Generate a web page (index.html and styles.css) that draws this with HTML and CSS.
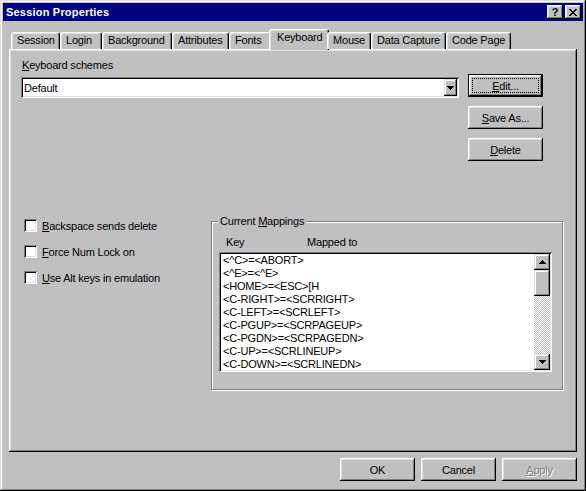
FILE: index.html
```html
<!DOCTYPE html>
<html>
<head>
<meta charset="utf-8">
<title>Session Properties</title>
<link rel="stylesheet" href="styles.css">
</head>
<body>
<div class="window">
  <div class="titlebar">
    <span class="title">Session Properties</span>
    <div class="title-buttons">
      <span class="tbtn tbtn-help">?</span>
      <span class="tbtn"><svg width="8" height="7" viewBox="0 0 8 7"><path d="M0 0h2v1H0zM6 0h2v1H6zM1 1h2v1H1zM5 1h2v1H5zM2 2h4v1H2zM3 3h2v1H3zM2 4h4v1H2zM1 5h2v1H1zM5 5h2v1H5zM0 6h2v1H0zM6 6h2v1H6z" fill="#000"/></svg></span>
    </div>
  </div>
  <div class="body">
    <div class="tabs">
      <div class="tab">Session</div>
      <div class="tab">Login</div>
      <div class="tab">Background</div>
      <div class="tab">Attributes</div>
      <div class="tab">Fonts</div>
      <div class="tab tab-active">Keyboard</div>
      <div class="tab">Mouse</div>
      <div class="tab">Data Capture</div>
      <div class="tab">Code Page</div>
    </div>
    <div class="panel">
      <div class="top">
        <div class="scheme">
          <div class="label"><u>K</u>eyboard schemes</div>
          <div class="combo">
            <span class="combo-text">Default</span>
            <span class="combo-btn"><svg width="7" height="4" viewBox="0 0 7 4"><path d="M0 0h7v1H0zM1 1h5v1H1zM2 2h3v1H2zM3 3h1v1H3z" fill="#000"/></svg></span>
          </div>
        </div>
        <div class="btn-col">
          <div class="btn btn-default"><span class="focus"><u>E</u>dit...</span></div>
          <div class="btn"><u>S</u>ave As...</div>
          <div class="btn"><u>D</u>elete</div>
        </div>
      </div>
      <div class="bottom">
        <div class="checks">
          <div class="check"><span class="box"></span><span><u>B</u>ackspace sends delete</span></div>
          <div class="check"><span class="box"></span><span><u>F</u>orce Num Lock on</span></div>
          <div class="check"><span class="box"></span><span><u>U</u>se Alt keys in emulation</span></div>
        </div>
        <div class="group">
          <div class="group-title">Current <u>M</u>appings</div>
          <div class="cols"><span class="col-key">Key</span><span>Mapped to</span></div>
          <div class="list">
            <div class="list-items">
              <div class="item">&lt;^C&gt;=&lt;ABORT&gt;</div>
              <div class="item">&lt;^E&gt;=&lt;^E&gt;</div>
              <div class="item">&lt;HOME&gt;=&lt;ESC&gt;[H</div>
              <div class="item">&lt;C-RIGHT&gt;=&lt;SCRRIGHT&gt;</div>
              <div class="item">&lt;C-LEFT&gt;=&lt;SCRLEFT&gt;</div>
              <div class="item">&lt;C-PGUP&gt;=&lt;SCRPAGEUP&gt;</div>
              <div class="item">&lt;C-PGDN&gt;=&lt;SCRPAGEDN&gt;</div>
              <div class="item">&lt;C-UP&gt;=&lt;SCRLINEUP&gt;</div>
              <div class="item">&lt;C-DOWN&gt;=&lt;SCRLINEDN&gt;</div>
            </div>
            <div class="scrollbar">
              <div class="sb-btn"><svg width="7" height="4" viewBox="0 0 7 4"><path d="M3 0h1v1H3zM2 1h3v1H2zM1 2h5v1H1zM0 3h7v1H0z" fill="#000"/></svg></div>
              <div class="sb-thumb"></div>
              <div class="sb-track"></div>
              <div class="sb-btn"><svg width="7" height="4" viewBox="0 0 7 4"><path d="M0 0h7v1H0zM1 1h5v1H1zM2 2h3v1H2zM3 3h1v1H3z" fill="#000"/></svg></div>
            </div>
          </div>
        </div>
      </div>
    </div>
    <div class="actions">
      <div class="btn">OK</div>
      <div class="btn">Cancel</div>
      <div class="btn btn-disabled"><u>A</u>pply</div>
    </div>
  </div>
</div>
</body>
</html>
```
FILE: styles.css
```css
* { box-sizing: border-box; }

body {
  margin: 0;
  font-family: "Liberation Sans", Arial, sans-serif;
  font-size: 11px;
  letter-spacing: -0.2px;
  color: #000;
  background: #c0c0c0;
}

u { text-underline-offset: 1px; }

.window {
  width: 586px;
  height: 491px;
  padding: 3px;
  background: #c0c0c0;
  display: flex;
  flex-direction: column;
  box-shadow: inset -1px -1px #000, inset 1px 1px #dfdfdf, inset -2px -2px #808080, inset 2px 2px #fff;
}

.titlebar {
  height: 18px;
  flex: none;
  background: #000080;
  display: flex;
  align-items: center;
  justify-content: space-between;
  padding: 0 2px 0 3px;
}

.title {
  color: #fff;
  font-weight: bold;
  font-size: 11px;
  letter-spacing: 0.2px;
}

.title-buttons { display: flex; gap: 2px; }

.tbtn {
  width: 16px;
  height: 14px;
  background: #c0c0c0;
  display: flex;
  align-items: center;
  justify-content: center;
  box-shadow: inset -1px -1px #000, inset 1px 1px #fff, inset -2px -2px #808080, inset 2px 2px #dfdfdf;
}

.tbtn-help {
  font-weight: bold;
  font-size: 11px;
  line-height: 12px;
  padding-bottom: 1px;
  letter-spacing: 0;
}

.body {
  flex: 1;
  display: flex;
  flex-direction: column;
  padding: 8px 6px 0 6px;
}

.tabs {
  display: grid;
  grid-template-columns: 49px 42px 70px 57px 42px 56px 44px 75px 65px;
  height: 20px;
  padding-left: 2px;
  align-items: end;
  position: relative;
  z-index: 1;
}

.tab {
  height: 17px;
  border: 1px solid;
  border-color: #fff #000 transparent #fff;
  border-bottom: none;
  border-radius: 3px 3px 0 0;
  box-shadow: inset -1px 0 #808080, inset 1px 1px #dfdfdf;
  background: #c0c0c0;
  padding: 1px 0 0 5px;
  line-height: 13px;
  white-space: nowrap;
}

.tab-active {
  height: 21px;
  margin: 0 -2px -1px -2px;
  padding-left: 7px;
}

.panel {
  height: 403px;
  flex: none;
  background: #c0c0c0;
  padding: 10px 12px 0 12px;
  box-shadow: inset -1px -1px #000, inset 1px 1px #fff, inset -2px -2px #808080, inset 2px 2px #dfdfdf;
}

.top { display: flex; align-items: flex-start; }

.scheme { width: 438px; }

.label { line-height: 13px; padding-left: 1px; }

.combo {
  margin-top: 5px;
  height: 21px;
  background: #fff;
  display: flex;
  align-items: center;
  padding: 2px;
  box-shadow: inset 1px 1px #808080, inset -1px -1px #fff, inset 2px 2px #000, inset -2px -2px #dfdfdf;
}

.combo-text { flex: 1; padding-left: 1px; }

.combo-btn {
  width: 13px;
  height: 17px;
  background: #c0c0c0;
  display: flex;
  align-items: center;
  justify-content: center;
  box-shadow: inset -1px -1px #000, inset 1px 1px #dfdfdf, inset -2px -2px #808080, inset 2px 2px #fff;
}

.btn-col {
  margin-left: 9px;
  margin-top: 15px;
  display: flex;
  flex-direction: column;
  gap: 9px;
}

.btn {
  width: 75px;
  height: 23px;
  background: #c0c0c0;
  display: flex;
  align-items: center;
  justify-content: center;
  box-shadow: inset -1px -1px #000, inset 1px 1px #fff, inset -2px -2px #808080, inset 2px 2px #dfdfdf;
}

.btn-default {
  border: 1px solid #000;
  align-items: stretch;
}

.focus {
  flex: 1;
  margin: 3px;
  border: 1px dotted #000;
  display: flex;
  align-items: center;
  justify-content: center;
}

.btn-disabled {
  color: #808080;
  text-shadow: 1px 1px #fff;
}

.bottom {
  display: flex;
  align-items: flex-start;
  margin-top: 54px;
}

.checks {
  width: 190px;
  padding: 4px 0 0 3px;
  display: flex;
  flex-direction: column;
  gap: 13px;
}

.check {
  display: flex;
  align-items: center;
  height: 13px;
}

.box {
  width: 13px;
  height: 13px;
  margin-right: 5px;
  background: #fff;
  box-shadow: inset 1px 1px #808080, inset -1px -1px #fff, inset 2px 2px #000, inset -2px -2px #dfdfdf;
}

.group {
  width: 352px;
  height: 169px;
  margin-top: 6px;
  border: 1px solid #808080;
  box-shadow: inset 1px 1px #fff, 1px 1px #fff;
  padding: 0 10px 0 7px;
}

.group-title {
  width: fit-content;
  margin: -7px 0 0 -1px;
  padding: 0 2px;
  background: #c0c0c0;
  line-height: 13px;
}

.cols {
  display: flex;
  margin-top: 8px;
  padding-left: 7px;
  line-height: 13px;
}

.col-key { width: 81px; }

.list {
  margin-top: 3px;
  height: 120px;
  background: #fff;
  padding: 2px;
  display: flex;
  box-shadow: inset 1px 1px #808080, inset -1px -1px #fff, inset 2px 2px #000, inset -2px -2px #dfdfdf;
}

.list-items {
  flex: 1;
  padding-left: 2px;
  line-height: 13px;
  overflow: hidden;
  white-space: nowrap;
}

.scrollbar {
  width: 16px;
  display: flex;
  flex-direction: column;
}

.sb-btn, .sb-thumb {
  height: 16px;
  background: #c0c0c0;
  display: flex;
  align-items: center;
  justify-content: center;
  box-shadow: inset -1px -1px #000, inset 1px 1px #dfdfdf, inset -2px -2px #808080, inset 2px 2px #fff;
}

.sb-thumb { height: 26px; }

.sb-track {
  flex: 1;
  background: repeating-conic-gradient(#c0c0c0 0 25%, #fff 0 50%) 0 0 / 2px 2px;
}

.actions {
  display: flex;
  justify-content: flex-end;
  gap: 6px;
  margin-top: 6px;
}
```
